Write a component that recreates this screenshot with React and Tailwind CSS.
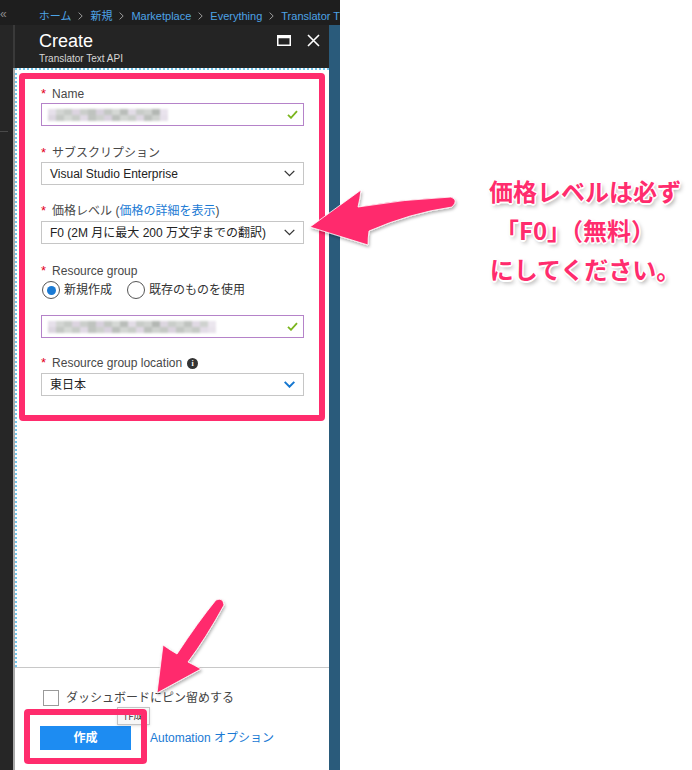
import React from "react";

const MOSAIC_A = [
  ["bg-[#e6e0ea]", "bg-[#d2d5d2]", "bg-[#c6cac6]", "bg-[#dcd4e0]", "bg-[#cbcecb]", "bg-[#bfc3bf]", "bg-[#d8d1dd]", "bg-[#c3c7c3]", "bg-[#d5d8d5]", "bg-[#b9bdb9]", "bg-[#e2dce6]", "bg-[#c7cbc7]", "bg-[#d0d3d0]", "bg-[#b3b7b3]", "bg-[#e9e3ed]"],
  ["bg-[#dcd6e0]", "bg-[#c4c8c4]", "bg-[#d6d9d6]", "bg-[#c8ccc8]", "bg-[#e1dae5]", "bg-[#c0c4c0]", "bg-[#cdd0cd]", "bg-[#d9d2de]", "bg-[#bcc0bc]", "bg-[#d3d6d3]", "bg-[#c9cdc9]", "bg-[#dfd8e3]", "bg-[#bdc1bd]", "bg-[#cfd2cf]", "bg-[#e6e0ea]"],
];

const MOSAIC_B = [
  ["bg-[#e6e0ea]", "bg-[#d2d5d2]", "bg-[#c6cac6]", "bg-[#dcd4e0]", "bg-[#cbcecb]", "bg-[#bfc3bf]", "bg-[#d8d1dd]", "bg-[#c3c7c3]", "bg-[#d5d8d5]", "bg-[#b9bdb9]", "bg-[#e2dce6]", "bg-[#c7cbc7]", "bg-[#d0d3d0]", "bg-[#b3b7b3]", "bg-[#dcd6e0]", "bg-[#c9cdc9]", "bg-[#d4d7d4]", "bg-[#bfc3bf]", "bg-[#e0d9e4]", "bg-[#cfd2cf]", "bg-[#ebe6ee]"],
  ["bg-[#dcd6e0]", "bg-[#c4c8c4]", "bg-[#d6d9d6]", "bg-[#c8ccc8]", "bg-[#e1dae5]", "bg-[#c0c4c0]", "bg-[#cdd0cd]", "bg-[#d9d2de]", "bg-[#bcc0bc]", "bg-[#d3d6d3]", "bg-[#c9cdc9]", "bg-[#dfd8e3]", "bg-[#bdc1bd]", "bg-[#cfd2cf]", "bg-[#c5c9c5]", "bg-[#dad3de]", "bg-[#c2c6c2]", "bg-[#d1d4d1]", "bg-[#c6cac6]", "bg-[#e3dde7]", "bg-[#e8e3eb]"],
];

function Mosaic({ rows }) {
  return (
    <div className="flex flex-col blur-[1.2px]">
      {rows.map((row, i) => (
        <div key={i} className="flex">
          {row.map((c, j) => (
            <div key={j} className={"w-[8px] h-[6px] " + c} />
          ))}
        </div>
      ))}
    </div>
  );
}

function Check() {
  return (
    <svg width="11" height="9" viewBox="0 0 11 9">
      <path d="M1 4.8 L4 7.8 L10 1.2" fill="none" stroke="#7bb51e" strokeWidth="1.8" />
    </svg>
  );
}

function Chevron({ blue }) {
  return (
    <svg width="11" height="7" viewBox="0 0 11 7">
      <path
        d="M0.7 0.9 L5.5 5.7 L10.3 0.9"
        fill="none"
        stroke={blue ? "#1577d0" : "#333"}
        strokeWidth={blue ? 2 : 1.3}
      />
    </svg>
  );
}

function Crumb() {
  return (
    <svg width="5" height="8" viewBox="0 0 5 8" className="mx-[7px] shrink-0">
      <path d="M0.6 0.6 L4.2 4 L0.6 7.4" fill="none" stroke="#9a9a9a" strokeWidth="1" />
    </svg>
  );
}

function Label({ children }) {
  return (
    <div className="h-[16px] leading-[16px] text-[12px] text-[#484848] whitespace-nowrap flex items-center">
      <span className="text-[#e3001b] text-[13px] mr-[6px]">*</span>
      {children}
    </div>
  );
}

function TextInput({ rows, className }) {
  return (
    <div className={"h-[23px] border border-[#b583c9] flex items-center justify-between pl-[6px] pr-[5px] bg-white " + className}>
      <Mosaic rows={rows} />
      <Check />
    </div>
  );
}

function Select({ children, blue, className }) {
  return (
    <div className={"h-[23px] border border-[#c6c6c6] flex items-center justify-between pl-[8px] pr-[8px] bg-white text-[12px] text-[#222] " + className}>
      <span className="whitespace-nowrap">{children}</span>
      <Chevron blue={blue} />
    </div>
  );
}

export default function App() {
  return (
    <div className="relative w-[692px] h-[770px] overflow-hidden bg-white flex font-['Liberation_Sans','Noto_Sans_CJK_JP',sans-serif]">
      {/* Portal column */}
      <div className="w-[340px] h-full flex flex-col bg-[#242424]">
        {/* top breadcrumb bar */}
        <div className="h-[25px] flex bg-[#1e1e1e] shrink-0 overflow-hidden">
          <div className="w-[13px] pt-[8px] text-[12px] leading-[12px] text-[#8a8a8a]">«</div>
          <div className="ml-[26px] pt-[10px] flex items-center h-[22px] text-[11px] leading-[12px] text-[#4da3e6] whitespace-nowrap">
            <span>ホーム</span>
            <Crumb />
            <span>新規</span>
            <Crumb />
            <span>Marketplace</span>
            <Crumb />
            <span>Everything</span>
            <Crumb />
            <span>Translator T</span>
          </div>
        </div>

        <div className="flex-1 flex min-h-0">
          {/* left strip */}
          <div className="w-[13px] bg-[#262626] flex flex-col">
            <div className="mt-[106px] w-[8px] h-px bg-[#4a4a4a]" />
          </div>

          {/* blade */}
          <div className="w-[316px] flex flex-col">
            {/* header */}
            <div className="h-[43px] shrink-0 bg-[#242424] border-l-2 border-[#3a3a3a] flex justify-between pl-[24px] pr-[9px]">
              <div className="pt-[5px]">
                <div className="text-[18px] leading-[22px] text-white font-light">Create</div>
                <div className="mt-[1px] text-[10px] leading-[12px] text-[#d6d6d6]">Translator Text API</div>
              </div>
              <div className="pt-[9px] flex items-start gap-[16px]">
                <svg width="14" height="11" viewBox="0 0 14 11" className="mt-[1px]">
                  <rect x="0.75" y="0.75" width="12.5" height="9.5" fill="none" stroke="#fff" strokeWidth="1.5" />
                  <rect x="0.75" y="0.75" width="12.5" height="2.5" fill="#fff" />
                </svg>
                <svg width="13" height="13" viewBox="0 0 13 13">
                  <path d="M1 1 L12 12 M12 1 L1 12" stroke="#fff" strokeWidth="1.6" />
                </svg>
              </div>
            </div>

            {/* body + footer */}
            <div className="flex-1 flex flex-col bg-white border-l-2 border-[#a9a9a9] min-h-0">
              <div className="flex-1 border-t-2 border-l-2 border-dotted border-[#74c6ec] pt-[3px] pl-[2px] pr-[4px]">
                {/* highlighted form */}
                <div className="border-[6px] border-[#ff2c6d] rounded-[4px] pl-[16px] pr-[15px] pt-[7px] pb-[19px]">
                  <Label>Name</Label>
                  <TextInput rows={MOSAIC_A} className="mt-[1px]" />

                  <div className="mt-[19px]">
                    <Label>サブスクリプション</Label>
                    <Select className="mt-[1px]">Visual Studio Enterprise</Select>
                  </div>

                  <div className="mt-[18px]">
                    <Label>
                      価格レベル (<span className="text-[#1a7ad4]">価格の詳細を表示</span>)
                    </Label>
                    <Select className="mt-[2px]">F0 (2M 月に最大 200 万文字までの翻訳)</Select>
                  </div>

                  <div className="mt-[19px]">
                    <Label>Resource group</Label>
                    <div className="mt-[2px] h-[18px] flex items-center text-[12px] text-[#333]">
                      <div className="ml-[1px] w-[18px] h-[18px] rounded-full border border-[#555] bg-white flex items-center justify-center">
                        <div className="w-[9px] h-[9px] rounded-full bg-[#1a7ad4]" />
                      </div>
                      <span className="ml-[4px]">新規作成</span>
                      <div className="ml-[15px] w-[18px] h-[18px] rounded-full border border-[#555] bg-white" />
                      <span className="ml-[4px]">既存のものを使用</span>
                    </div>
                    <TextInput rows={MOSAIC_B} className="mt-[16px]" />
                  </div>

                  <div className="mt-[17px]">
                    <Label>
                      Resource group location
                      <span className="ml-[5px] w-[11px] h-[11px] rounded-full bg-[#333] text-white text-[8px] leading-[11px] font-bold flex items-center justify-center font-['Liberation_Serif',serif]">
                        i
                      </span>
                    </Label>
                    <Select blue className="mt-[2px]">東日本</Select>
                  </div>
                </div>
              </div>

              {/* footer */}
              <div className="h-[103px] shrink-0 border-t border-[#c8c8c8]">
                <div className="mt-[21px] ml-[28px] flex items-center h-[17px]">
                  <div className="w-[16px] h-[16px] border border-[#9a9a9a] bg-white" />
                  <span className="ml-[7px] text-[12px] text-[#444] whitespace-nowrap">ダッシュボードにピン留めする</span>
                </div>
                <div className="mt-[20px] ml-[25px] flex items-center">
                  <div className="w-[91px] h-[24px] bg-[#1d8cf2] flex items-center justify-center text-white text-[12px] font-bold">
                    作成
                  </div>
                  <span className="ml-[19px] text-[12px] text-[#1a7ad4] whitespace-nowrap">Automation オプション</span>
                </div>
              </div>
            </div>
          </div>

          {/* right strip */}
          <div className="w-[11px] bg-[#2a5b7b]" />
        </div>
      </div>

      {/* annotation text */}
      <div className="flex-1 pt-[171px] pl-[138px]">
        <div className="w-[214px] text-center text-[24px] leading-[39px] font-bold text-[#ff2c6d] whitespace-nowrap font-['Noto_Sans_CJK_JP',sans-serif] [text-shadow:1px_1px_0_#fff,-1px_-1px_0_#fff,1px_-1px_0_#fff,-1px_1px_0_#fff,0_1.5px_0_#fff,0_-1.5px_0_#fff,1.5px_0_0_#fff,-1.5px_0_0_#fff,2px_3px_4px_rgba(0,0,0,0.35)]">
          <div>価格レベルは必ず</div>
          <div className="pr-[20px]">「F0」（無料）</div>
          <div>にしてください。</div>
        </div>
      </div>

      {/* tooltip */}
      <div className="absolute left-[117px] top-[707px] w-[33px] h-[18px] bg-[#f7f7f7] border border-[#c4c4c4] shadow-sm text-[10px] leading-[16px] text-[#333] text-center">
        作成
      </div>

      {/* pink box around create button */}
      <div className="absolute left-[24px] top-[709px] w-[123px] h-[55px] border-[6px] border-[#ff2c6d] rounded-[4px]" />

      {/* arrows */}
      <svg className="absolute left-0 top-0 pointer-events-none" width="692" height="770" viewBox="0 0 692 770">
        <defs>
          <filter id="sh" x="-20%" y="-20%" width="140%" height="140%">
            <feDropShadow dx="1" dy="2" stdDeviation="1.5" floodColor="#000" floodOpacity="0.3" />
          </filter>
        </defs>
        <path
          d="M310 227 L361 190 Q360 199 358 207 Q405 199 451 197 Q459 200 452 207 Q410 213 369 231 Q368 238 368 245 Z"
          fill="#ff2c6d"
          stroke="#fff"
          strokeWidth="0.8"
          strokeLinejoin="round"
          filter="url(#sh)"
        />
        <path
          d="M157 693 L163 645 Q170 650 177 654 Q198 622 216 600 Q223 597 224 605 Q206 638 188 662 Q194 665 201 669 Z"
          fill="#ff2c6d"
          stroke="#fff"
          strokeWidth="0.8"
          strokeLinejoin="round"
          filter="url(#sh)"
        />
      </svg>
    </div>
  );
}
